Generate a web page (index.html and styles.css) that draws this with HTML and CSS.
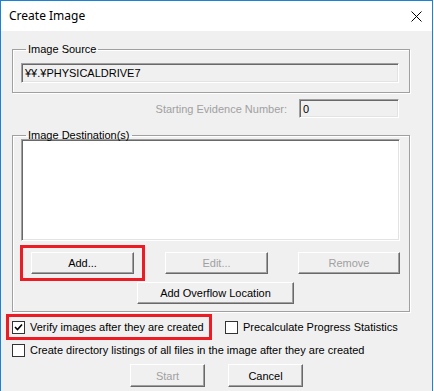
FILE: index.html
```html
<!DOCTYPE html>
<html>
<head>
    <meta charset="UTF-8">
    <title>Create Image</title>
    <link rel="stylesheet" href="styles.css">
</head>
<body>
    <div class="window">
        <div class="titlebar">
            <span class="title">Create Image</span>
            <svg class="close" width="11" height="11" viewBox="0 0 11 11">
                <path d="M0.5 0.5 L10.5 10.5 M10.5 0.5 L0.5 10.5" stroke="#000" stroke-width="1" fill="none"/>
            </svg>
        </div>

        <div class="client">
            <!-- Image Source -->
            <fieldset class="group source">
                <legend>Image Source</legend>
                <div class="textbox readonly path">¥¥.¥PHYSICALDRIVE7</div>
            </fieldset>

            <div class="evidence-row">
                <span class="disabled-text">Starting Evidence Number:</span>
                <div class="textbox readonly number">0</div>
            </div>

            <!-- Image Destination(s) -->
            <fieldset class="group dest">
                <legend>Image Destination(s)</legend>
                <div class="listbox"></div>
                <div class="button-row">
                    <span class="mark add-mark"><button class="btn">Add...</button></span>
                    <button class="btn edit" disabled>Edit...</button>
                    <button class="btn remove" disabled>Remove</button>
                </div>
                <button class="btn overflow">Add Overflow Location</button>
            </fieldset>

            <div class="check-row first">
                <span class="mark verify-mark">
                    <span class="checkbox checked">
                        <svg width="11" height="11" viewBox="0 0 11 11">
                            <path d="M2 5 L4.5 7.5 L9 2.5" stroke="#000" stroke-width="1.6" fill="none"/>
                        </svg>
                    </span>
                    <span class="check-label">Verify images after they are created</span>
                </span>
                <span class="check precalc">
                    <span class="checkbox"></span>
                    <span class="check-label">Precalculate Progress Statistics</span>
                </span>
            </div>

            <div class="check-row second">
                <span class="check">
                    <span class="checkbox"></span>
                    <span class="check-label">Create directory listings of all files in the image after they are created</span>
                </span>
            </div>

            <div class="footer">
                <button class="btn start" disabled>Start</button>
                <button class="btn cancel">Cancel</button>
            </div>
        </div>
    </div>
</body>
</html>
```

FILE: styles.css
```css
* {
    box-sizing: border-box;
}

body {
    margin: 0;
    background-color: #ffffff;
    font-family: "Liberation Sans", Arial, sans-serif;
    font-size: 11px;
    color: #000;
}

.window {
    width: 433px;
    height: 391px;
    border: 1px solid #1883d7;
    border-bottom: none;
    background-color: #f0f0f0;
    display: flex;
    flex-direction: column;
}

.titlebar {
    height: 30px;
    background-color: #fff;
    display: flex;
    align-items: center;
    padding-left: 8px;
    padding-right: 10px;
}

.title {
    font-family: "Segoe UI", "Noto Sans", sans-serif;
    font-size: 12px;
    flex: 1;
    margin-top: -1px;
}

.close {
    display: block;
    margin-top: 0;
}

.client {
    flex: 1;
    padding: 12px 22px 0 11px;
}

/* group boxes */
.group {
    margin: 0;
    width: 398px;
    border: 1px solid #a0a0a0;
    box-shadow: inset 1px 1px 0 #fff, 1px 1px 0 #fff;
    padding: 7px 8px 9px 8px;
}

.group legend {
    padding: 0 2px;
    margin-left: 5px;
    line-height: 13px;
}

.source {
    padding-bottom: 9px;
}

.dest {
    margin-top: 11px;
    padding-top: 0;
    padding-bottom: 7px;
}

/* sunken boxes */
.textbox,
.listbox {
    border: 1px solid;
    border-color: #a0a0a0 #fff #fff #a0a0a0;
    box-shadow: inset 1px 1px 0 #696969, inset -1px -1px 0 #e3e3e3;
}

.textbox {
    padding-left: 3px;
    display: flex;
    align-items: center;
}

.readonly {
    background-color: #f0f0f0;
}

.path {
    width: 378px;
    height: 20px;
}

.evidence-row {
    margin-top: 6px;
    width: 398px;
    padding-right: 11px;
    display: flex;
    justify-content: flex-end;
    align-items: center;
    gap: 12px;
}

.disabled-text {
    color: #a0a0a0;
}

.number {
    width: 100px;
    height: 19px;
}

.listbox {
    margin-top: -3px;
    width: 379px;
    height: 102px;
    background-color: #fff;
}

/* buttons */
.btn {
    font-family: inherit;
    font-size: 11px;
    color: #000;
    background-color: #f0f0f0;
    border: 1px solid;
    border-color: #fff #696969 #696969 #fff;
    box-shadow: inset -1px -1px 0 #a0a0a0;
    height: 22px;
    padding: 0;
    display: block;
}

.btn:disabled {
    color: #a0a0a0;
}

.button-row {
    margin-top: 4px;
    display: flex;
    align-items: center;
}

.button-row .btn {
    width: 103px;
}

.edit {
    margin-left: 20px;
}

.button-row .remove {
    margin-left: 30px;
    width: 102px;
}

.overflow {
    margin-top: 1px;
    margin-left: 116px;
    width: 157px;
}

/* red marks */
.mark {
    border: 3px solid #ed1c24;
    display: flex;
    align-items: center;
}

.add-mark {
    margin-left: -1px;
    padding: 4px 8px;
}

.verify-mark {
    margin-left: -6px;
    width: 206px;
    height: 26px;
    padding-left: 3px;
}

/* checkboxes */
.check-row {
    display: flex;
    align-items: center;
}

.check-row.first {
    margin-top: 2px;
}

.check-row.second {
    margin-top: 3px;
    height: 14px;
}

.check {
    display: flex;
    align-items: center;
}

.precalc {
    margin-left: 13px;
}

.checkbox {
    width: 13px;
    height: 13px;
    border: 1px solid #333;
    background-color: #fff;
    display: flex;
    align-items: center;
    justify-content: center;
    flex-shrink: 0;
}

.check-label {
    margin-left: 5px;
    white-space: nowrap;
}

.footer {
    margin-top: 7px;
    display: flex;
}

.footer .btn {
    width: 75px;
    height: 23px;
}

.start {
    margin-left: 118px;
}

.cancel {
    margin-left: 23px;
}
```
